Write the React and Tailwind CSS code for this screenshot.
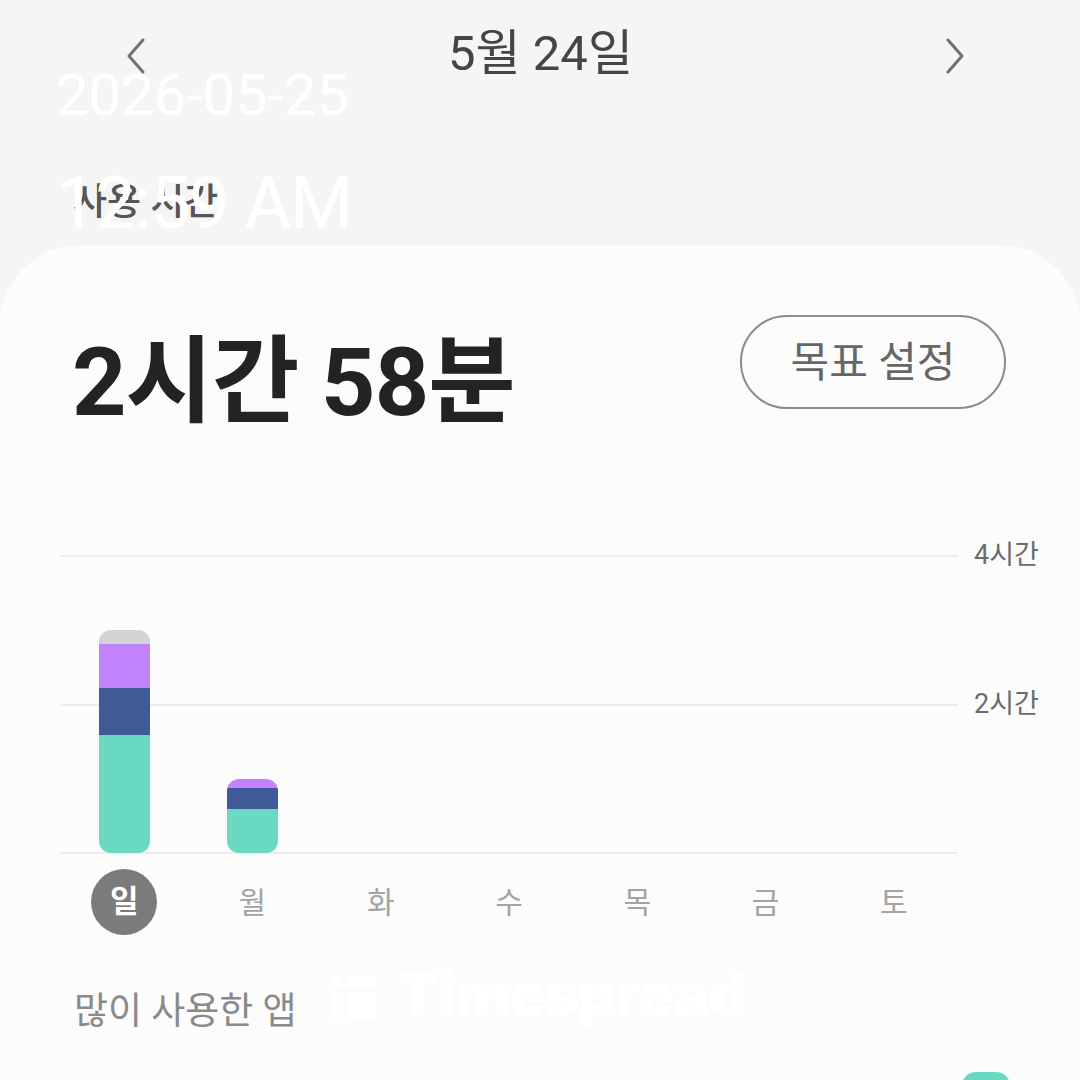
const KR = { fontFamily: "Roboto, 'Noto Sans CJK KR', sans-serif" }

function Chevron({ dir }) {
  return (
    <svg width="24" height="40" viewBox="0 0 24 40" fill="none">
      <path
        d={dir === 'left' ? 'M19 4 L5 20 L19 36' : 'M5 4 L19 20 L5 36'}
        stroke="#707070"
        strokeWidth="3"
        strokeLinecap="round"
        strokeLinejoin="round"
      />
    </svg>
  )
}

const days = ['일', '월', '화', '수', '목', '금', '토']

const bars = {
  0: [
    ['#d4d4d4', 14],
    ['#c383fb', 44],
    ['#3f5a96', 47],
    ['#6ad9c2', 118],
  ],
  1: [
    ['#c383fb', 9],
    ['#3f5a96', 21],
    ['#6ad9c2', 44],
  ],
}

export default function App() {
  return (
    <div className="relative w-[1080px] h-[1080px] overflow-hidden bg-[#f5f5f5]" style={KR}>
      {/* top area */}
      <div className="h-[245px]">
        <div className="h-[112px] flex items-center justify-between pl-[124px] pr-[113px]">
          <Chevron dir="left" />
          <div className="text-[49px] leading-none text-[#454545] -mt-[6px] -ml-[10px]">5월 24일</div>
          <Chevron dir="right" />
        </div>
        <div className="pl-[73px] mt-[71px] text-[37px] leading-[40px] font-medium text-[#555]">사용 시간</div>
      </div>

      {/* card */}
      <div className="bg-[#fcfcfc] rounded-t-[80px] h-[900px]">
        <div className="flex items-start justify-between pl-[72px] pr-[74px] pt-[70px]">
          <div className="mt-[20px] text-[95px] leading-none font-bold text-[#232323] tracking-[-0.01em]">2시간 58분</div>
          <button className="w-[266px] h-[94px] rounded-full border-[2.5px] border-[#8c8c8c] text-[42px] text-[#666] flex items-center justify-center">
            목표 설정
          </button>
        </div>

        {/* chart */}
        <div className="flex pl-[60px] mt-[125px]">
          <div className="grid w-[898px] h-[299px]">
            <div className="col-start-1 row-start-1 flex flex-col justify-between">
              <div className="h-[2px] bg-[#ededed]" />
              <div className="h-[2px] bg-[#ededed]" />
              <div className="h-[2px] bg-[#ededed]" />
            </div>
            <div className="col-start-1 row-start-1 grid grid-cols-7 items-end pb-px">
              {days.map((d, i) => (
                <div key={d} className="flex justify-center">
                  {bars[i] && (
                    <div className="w-[51px] flex flex-col rounded-[12px] overflow-hidden">
                      {bars[i].map(([c, h], j) => (
                        <div key={j} style={{ backgroundColor: c, height: h }} />
                      ))}
                    </div>
                  )}
                </div>
              ))}
            </div>
          </div>
          <div className="ml-[16px] flex flex-col -mt-[15px] gap-[119px] text-[27px] leading-[30px] text-[#6b6b6b]">
            <span>4시간</span>
            <span>2시간</span>
          </div>
        </div>

        {/* day labels */}
        <div className="pl-[60px] mt-[15px]">
          <div className="w-[898px] grid grid-cols-7">
            {days.map((d, i) => (
              <div key={d} className="flex justify-center">
                {i === 0 ? (
                  <div className="w-[66px] h-[66px] rounded-full bg-[#7b7b7b] flex items-center justify-center text-white text-[31px] font-bold">
                    {d}
                  </div>
                ) : (
                  <div className="h-[66px] flex items-center text-[30px] text-[#a3a3a3]">{d}</div>
                )}
              </div>
            ))}
          </div>
        </div>

        <div className="pl-[74px] mt-[54px] text-[37px] leading-[46px] text-[#8a8a8a]">많이 사용한 앱</div>

        <div className="flex justify-end pr-[70px] mt-[37px]">
          <div className="w-[48px] h-[48px] rounded-[14px] bg-[#6ad9c2]" />
        </div>
      </div>

      {/* watermark overlay */}
      <div className="absolute left-[56px] top-[66px] text-white" style={{ fontFamily: 'Roboto, sans-serif' }}>
        <div className="text-[58px] leading-none">2026-05-25</div>
        <div className="mt-[44px] text-[72px] leading-none tracking-[-0.02em]">12:59 AM</div>
      </div>

      <div className="absolute left-[330px] top-[975px] flex items-start gap-[21px] text-white">
        <svg width="48" height="47" viewBox="0 0 48 47" fill="#ffffff">
          <circle cx="6.5" cy="7" r="6.5" />
          <rect x="0" y="17" width="13" height="30" />
          <rect x="16" y="1" width="31" height="12" />
          <rect x="16" y="17" width="31" height="30" />
        </svg>
        <div className="text-[58px] leading-none font-black tracking-[-0.005em] -mt-[10px]" style={{ fontFamily: 'Inter, sans-serif' }}>
          Timespread
        </div>
      </div>
    </div>
  )
}
